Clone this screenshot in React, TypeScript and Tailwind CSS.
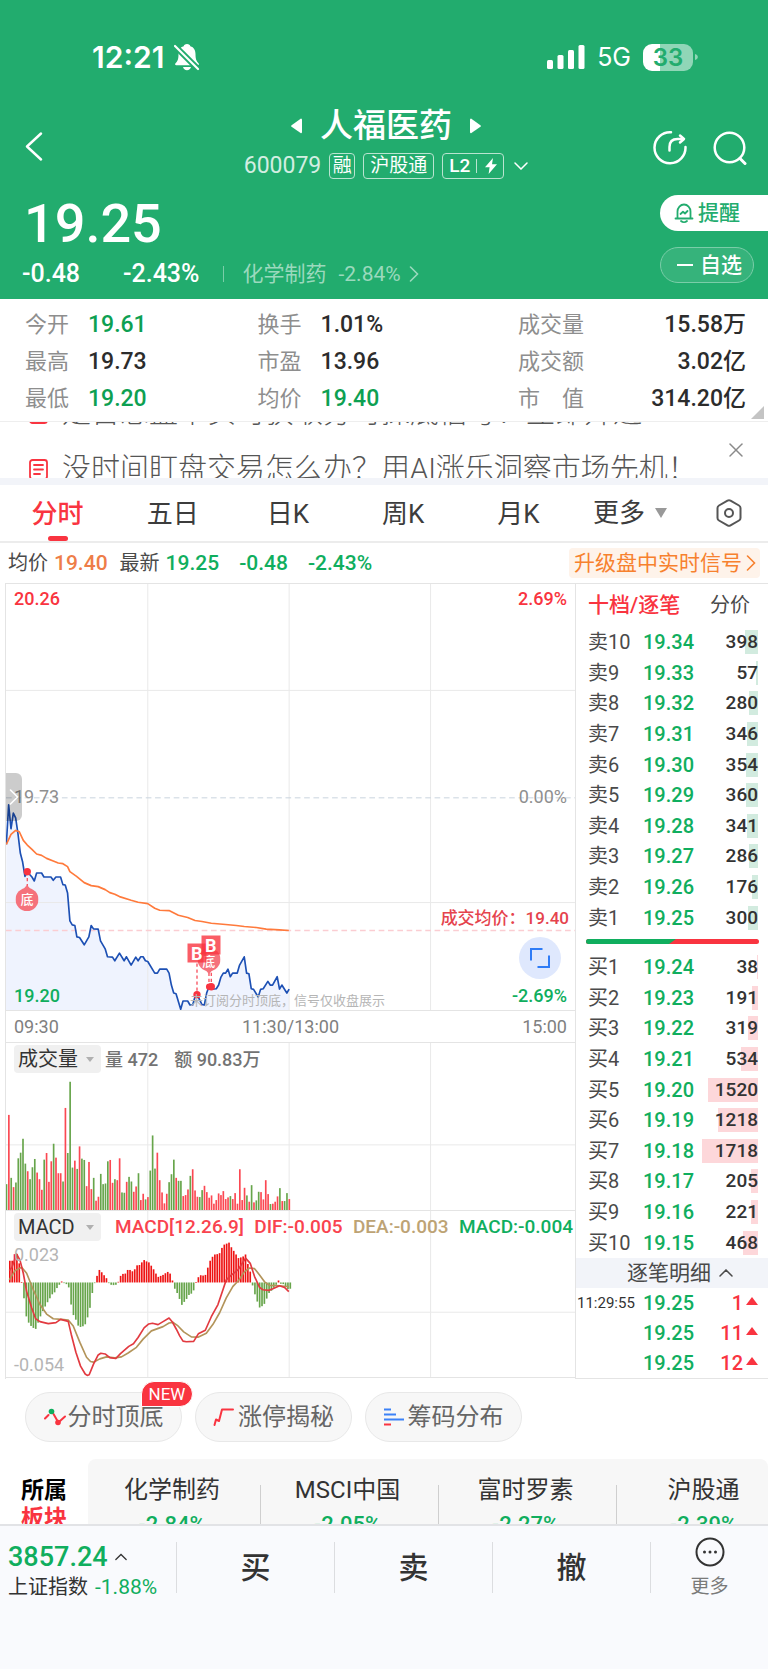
import { useState } from "react";
import { X } from "lucide-react";
import clsx from "clsx";

interface Quote {
  label: string;
  price: string;
  qty: number;
}

const SELLS: Quote[] = [
  { label: "卖10", price: "19.34", qty: 398 },
  { label: "卖9", price: "19.33", qty: 57 },
  { label: "卖8", price: "19.32", qty: 280 },
  { label: "卖7", price: "19.31", qty: 346 },
  { label: "卖6", price: "19.30", qty: 354 },
  { label: "卖5", price: "19.29", qty: 360 },
  { label: "卖4", price: "19.28", qty: 341 },
  { label: "卖3", price: "19.27", qty: 286 },
  { label: "卖2", price: "19.26", qty: 176 },
  { label: "卖1", price: "19.25", qty: 300 },
];

const BUYS: Quote[] = [
  { label: "买1", price: "19.24", qty: 38 },
  { label: "买2", price: "19.23", qty: 191 },
  { label: "买3", price: "19.22", qty: 319 },
  { label: "买4", price: "19.21", qty: 534 },
  { label: "买5", price: "19.20", qty: 1520 },
  { label: "买6", price: "19.19", qty: 1218 },
  { label: "买7", price: "19.18", qty: 1718 },
  { label: "买8", price: "19.17", qty: 205 },
  { label: "买9", price: "19.16", qty: 221 },
  { label: "买10", price: "19.15", qty: 468 },
];

const TICKS = [
  { time: "11:29:55", price: "19.25", qty: 1 },
  { time: "", price: "19.25", qty: 11 },
  { time: "", price: "19.25", qty: 12 },
];

const STATS = [
  [
    { label: "今开", value: "19.61", down: true },
    { label: "最高", value: "19.73", down: false },
    { label: "最低", value: "19.20", down: true },
  ],
  [
    { label: "换手", value: "1.01%", down: false },
    { label: "市盈", value: "13.96", down: false },
    { label: "均价", value: "19.40", down: true },
  ],
  [
    { label: "成交量", value: "15.58万", down: false },
    { label: "成交额", value: "3.02亿", down: false },
    { label: "市　值", value: "314.20亿", down: false },
  ],
];

const TABS = ["分时", "五日", "日K", "周K", "月K"];

const SECTORS = [
  { name: "化学制药", change: "-2.84%" },
  { name: "MSCI中国", change: "-2.05%" },
  { name: "富时罗素", change: "-2.27%" },
  { name: "沪股通", change: "-2.39%" },
];

// Chart geometry: three units per CSS pixel, plot starts at x=18
const PRICE_LINE =
  "19,822 26,703 33,775 40,728 47,742 54,790 61,848 68,875 75,918 82,905 96,920 103,932 110,908 125,908 132,920 153,920 160,930 168,920 182,920 189,943 196,944 203,968 210,1052 217,1064 225,1066 231,1100 239,1102 253,1124 267,1100 274,1066 281,1076 295,1077 302,1112 316,1136 323,1160 338,1161 345,1172 359,1149 373,1172 380,1160 394,1185 408,1161 415,1172 423,1160 430,1160 437,1172 444,1174 465,1209 473,1209 480,1197 501,1197 508,1209 515,1245 522,1269 529,1271 543,1318 550,1293 564,1293 571,1305 579,1305 586,1280 592,1273 607,1304 614,1305 621,1269 628,1250 635,1250 642,1257 650,1256 657,1245 664,1221 671,1209 678,1209 685,1197 692,1220 699,1209 713,1209 720,1185 734,1160 741,1209 748,1211 755,1256 762,1258 776,1281 783,1258 791,1256 805,1234 812,1245 819,1245 833,1220 840,1257 847,1245 862,1269 869,1257";

const AVG_LINE =
  "19,822 33,792 47,780 58,784 70,810 82,824 96,837 110,851 125,855 140,864 160,872 175,878 189,880 203,889 210,904 230,918 253,937 274,946 295,949 316,958 330,967 345,972 359,979 394,990 415,996 444,1000 465,1014 480,1020 508,1021 536,1035 564,1042 586,1051 607,1054 635,1059 678,1063 710,1066 734,1069 770,1072 800,1077 840,1079 868,1081";

// g = down minute, r = up minute, number = top of the bar
const VOLUMES =
  "g462 r253 g443 r471 g457 g384 g367 g325 g400 r423 g447 g411 g386 r427 r447 r479 g388 r368 r455 r393 g340 r382 r429 r429 g454 r232 g368 g153 g412 r391 g416 r348 g385 g389 r468 r395 r477 g443 r512 r500 g431 g462 g460 g393 r389 r458 g447 r450 r384 g487 g488 r455 g440 g454 r485 r469 g429 r510 r491 g508 r501 g421 g315 g415 r367 r450 r487 r520 r491 g456 g432 g388 r443 g452 g452 r498 r495 r478 g437 r417 r481 r500 g501 g480 r467 r486 r503 r496 r521 r510 r490 r495 r483 r507 r502 g498 r507 r489 r521 r417 r510 r473 g496 r515 g465 r517 g511 g485 r486 r508 r450 r492 g522 r521 r515 r499 g474 r513 g513 g489 r507".split(
    " ",
  );

const MACD_ZERO = 758;
const MACD_BARS = [
  692, 692, 672, 672, 700, 757, 806, 861, 880, 890, 896, 899, 880, 861, 845, 831, 818, 806, 794, 788, 775, 765, 755,
  760, 763, 773, 825, 857, 871, 889, 893, 891, 885, 864, 835, 790, 760, 738, 720, 727, 736, 745, 760, 765, 766, 765,
  756, 738, 732, 731, 720, 720, 724, 718, 706, 705, 697, 690, 694, 697, 707, 718, 731, 741, 738, 735, 730, 726, 731,
  752, 777, 790, 808, 826, 817, 808, 796, 792, 782, 757, 742, 736, 737, 735, 713, 692, 680, 673, 672, 669, 653, 643,
  640, 637, 651, 662, 673, 684, 682, 679, 673, 702, 725, 767, 794, 816, 834, 830, 823, 807, 790, 783, 774, 765, 752,
  762, 763, 769, 778, 777,
];

const DIF_LINE =
  "28,722 36,712 50,672 60,690 70,730 80,785 95,835 107,868 120,877 145,883 168,880 182,870 205,876 214,915 228,970 242,1012 256,1036 262,1040 268,1038 281,1006 295,978 303,973 316,975 330,986 348,989 362,974 387,952 401,944 415,925 433,896 447,884 458,882 475,886 490,877 508,866 518,878 530,900 540,920 550,936 560,938 582,937 596,914 617,903 635,862 655,825 670,780 680,750 695,736 715,720 738,684 752,700 765,740 780,773 790,780 808,782 820,777 840,768 855,773 868,786";

const DEA_LINE =
  "28,750 45,722 65,712 80,730 100,780 120,825 140,854 160,868 185,870 205,872 220,890 240,940 260,985 272,998 281,1000 300,990 320,984 345,987 365,984 385,972 410,955 430,930 455,905 490,892 508,881 520,879 535,890 552,908 575,923 595,924 620,912 640,885 660,850 680,805 700,770 717,752 735,725 750,714 765,716 780,735 795,756 810,767 840,768 868,771";

const MAX_QTY = 1718;

function SideArrow({ className }: { className: string }) {
  return (
    <svg className={className} viewBox="0 0 10 16" fill="none" stroke="currentColor" strokeWidth="1.600">
      <path d="M1.500 1 8.500 8l-7 7" strokeLinecap="round" />
    </svg>
  );
}

function UpArrow({ className }: { className: string }) {
  return (
    <svg className={className} viewBox="0 0 14 8" fill="none" stroke="currentColor" strokeWidth="1.500">
      <path d="M1 7 7 1l6 6" strokeLinecap="round" />
    </svg>
  );
}

function StatusBar() {
  return (
    <div className="flex items-center justify-between pt-[41px] pl-[92px] pr-[70px] font-['Inter',sans-serif]">
      <div className="flex items-center gap-2.5">
        <span className="text-[30px] leading-8 font-semibold">12:21</span>
        <svg className="w-[26px] h-[28px]" viewBox="0 0 26 28" fill="currentColor">
          <path d="M13 1c2 0 3 1 3.300 2.200 3.700 1 5.200 4 5.200 8 0 5 1 7 3 9 .8.9.4 2-.8 2H2.300c-1.200 0-1.600-1.100-.8-2 2-2 3-4 3-9 0-4 1.500-7 5.200-8C10 2 11 1 13 1ZM9 24h8c-.4 2-2 3.200-4 3.200S9.400 26 9 24Z" />
          <path d="M1 3 24 26" stroke="#22ac6e" strokeWidth="6" />
          <path d="M1 3 24 26" stroke="currentColor" strokeWidth="2.200" strokeLinecap="round" />
        </svg>
      </div>
      <div className="flex items-center">
        <svg className="w-[38px] h-6" viewBox="0 0 38 24" fill="currentColor">
          <rect x="0" y="15" width="6" height="9" rx="1.500" />
          <rect x="10.500" y="10" width="6" height="14" rx="1.500" />
          <rect x="21" y="5" width="6" height="19" rx="1.500" />
          <rect x="31.500" y="0" width="6" height="24" rx="1.500" />
        </svg>
        <span className="ml-3 text-[25px] leading-8">5G</span>
        <span className="ml-3 w-[50px] h-[27px] rounded-[9px] bg-gradient-to-r from-white from-33% to-[#90d6b7] to-33% text-[#22ac6e] text-[24px] leading-[27px] font-semibold text-center">
          33
        </span>
        <svg className="ml-0.5 w-[3px] h-2" viewBox="0 0 4 8">
          <path d="M0 0c5 1 5 7 0 8Z" fill="#90d6b7" />
        </svg>
      </div>
    </div>
  );
}

function Header() {
  return (
    <header className="bg-[#22ac6e] text-white pb-[9px]">
      <StatusBar />
      <div className="grid grid-cols-[1fr_auto_1fr] items-center pt-8 pl-[25px] pr-[21px]">
        <button aria-label="返回" className="pt-2">
          <svg className="w-[18px] h-[29px]" viewBox="0 0 18 29" fill="none" stroke="currentColor" strokeWidth="2.400">
            <path d="M16 1.500 2 14.500 16 27.500" strokeLinecap="round" strokeLinejoin="round" />
          </svg>
        </button>
        <div className="flex flex-col items-center gap-[5px]">
          <div className="flex items-center gap-[18px]">
            <button aria-label="上一只">
              <svg className="w-[11px] h-4" viewBox="0 0 11 16" fill="currentColor">
                <path d="M10 0.500c.6.200 1 .6 1 1.500v12c0 1-.6 1.500-1.400 1L.6 8.800c-.7-.5-.7-1.100 0-1.600Z" />
              </svg>
            </button>
            <h1 className="text-[33px] leading-[42px] font-medium">人福医药</h1>
            <button aria-label="下一只">
              <svg className="w-[11px] h-4" viewBox="0 0 11 16" fill="currentColor">
                <path d="M1 .5C.4.700 0 1.100 0 2v12c0 1 .6 1.500 1.400 1l9-6.200c.7-.5.7-1.100 0-1.600Z" />
              </svg>
            </button>
          </div>
          <div className="flex items-center">
            <span className="text-[23px] leading-7 text-[#d3eee2]">600079</span>
            <span className="ml-2 w-[26px] h-[26px] rounded border border-[#b9e4d0] text-[19px] leading-6 text-center">
              融
            </span>
            <span className="ml-2 w-[71px] h-[26px] rounded border border-[#b9e4d0] text-[19px] leading-6 text-center">
              沪股通
            </span>
            <span className="ml-2 w-[62px] h-[26px] rounded border border-[#b9e4d0] flex items-center justify-center text-[19px] leading-6 font-medium">
              L2
              <span className="w-px h-3.5 bg-[#b9e4d0] ml-1.5 mr-2" />
              <svg className="w-3 h-4" viewBox="0 0 12 16" fill="currentColor">
                <path d="M8 0 0 9.300h4.600L3.600 16 12 6.300H7Z" />
              </svg>
            </span>
            <UpArrow className="ml-2.5 w-3.5 h-2 rotate-180" />
          </div>
        </div>
        <div className="flex justify-end gap-[26px] pt-2.5">
          <button aria-label="分享">
            <svg
              className="w-[34px] h-[36px]"
              viewBox="0 0 34 36"
              fill="none"
              stroke="currentColor"
              strokeWidth="2.500"
              strokeLinecap="round"
            >
              <path d="M18 2.200A15.500 15.500 0 1 0 32.500 17" />
              <path d="M16.500 20.500V17c0-5.500 3-8 8-8h5.500" />
              <path d="m27 5.500 4 3.500-4 3.500" strokeLinejoin="round" />
            </svg>
          </button>
          <button aria-label="搜索">
            <svg
              className="w-[34px] h-[36px]"
              viewBox="0 0 34 36"
              fill="none"
              stroke="currentColor"
              strokeWidth="2.500"
              strokeLinecap="round"
            >
              <circle cx="16.500" cy="17.500" r="14.800" />
              <path d="m27 28.500 5 5" strokeWidth="3" />
            </svg>
          </button>
        </div>
      </div>
      <div className="flex justify-between pt-[14px]">
        <div className="pl-[22px]">
          <p className="pl-0.5 text-[54px] leading-[60px] font-medium">19.25</p>
          <div className="flex items-center text-[25px] leading-8 pt-1">
            <span className="w-[101px] font-medium">-0.48</span>
            <span className="font-medium">-2.43%</span>
            <span className="ml-6 w-px h-4 bg-[#7acda8]" />
            <a href="#sector" className="ml-[18px] flex items-center text-[#9bd9bd]">
              <span className="text-[21px]">化学制药</span>
              <span className="ml-3 text-[21px]">-2.84%</span>
              <SideArrow className="ml-2 w-2.5 h-4" />
            </a>
          </div>
        </div>
        <div className="flex flex-col gap-4 pt-px text-[21px] leading-8 font-medium">
          <button className="flex items-center gap-1 h-9 w-[108px] pl-[14px] rounded-l-full bg-white text-[#22ac6e]">
            <svg
              className="w-5 h-5"
              viewBox="0 0 20 20"
              fill="none"
              stroke="currentColor"
              strokeWidth="1.800"
              strokeLinecap="round"
              strokeLinejoin="round"
            >
              <path d="M1.500 15.500h17M3.500 15V8.500a6.500 7 0 0 1 13 0V15M7 18c1.600 1.400 4.400 1.400 6 0" />
              <path d="m6.500 11 2.500-2.200 2 1.700L13.500 8" />
            </svg>
            提醒
          </button>
          <button className="flex items-center gap-[7px] h-9 w-[94px] pl-4 rounded-full border border-[#7acda8] bg-[#36b37b]">
            <span className="w-4 h-0.5 bg-white" />
            自选
          </button>
        </div>
      </div>
    </header>
  );
}

function Stats() {
  return (
    <section className="relative flex justify-between pl-[25px] pr-[22px] pt-[7px] pb-1 border-b border-[#eeeeee] text-[22px]">
      {STATS.map((col, i) => (
        <dl key={i} className={clsx("leading-[37px]", i === 2 && "w-[228px]", i === 1 && "mr-6")}>
          {col.map((s) => (
            <div key={s.label} className={clsx("flex gap-[19px]", i === 2 && "justify-between")}>
              <dt className="text-[#8e8e8e]">{s.label}</dt>
              <dd className={clsx("text-[23px] font-medium", s.down ? "text-[#0da052]" : "text-[#2c2c2c]")}>
                {s.value}
              </dd>
            </div>
          ))}
        </dl>
      ))}
      <svg className="absolute right-1 bottom-0.5 w-[13px] h-[13px]" viewBox="0 0 13 13">
        <path d="M13 0v13H0Z" fill="#c4c4c4" />
      </svg>
    </section>
  );
}

function NoteIcon() {
  return (
    <svg className="w-[19px] h-[21px] shrink-0" viewBox="0 0 19 21" fill="none" stroke="#f93440" strokeWidth="1.800">
      <rect x="1" y="1" width="17" height="19" rx="2.500" />
      <path d="M5 6h9M5 10.500h9M5 15h6" strokeLinecap="round" />
    </svg>
  );
}

// Vertical ticker, caught between two messages
function Notice() {
  return (
    <section className="flex items-center justify-between h-14 pl-[29px] pr-5 overflow-hidden">
      <div className="self-start flex flex-col gap-[26px] -mt-6 text-[29px] leading-[30px] font-light text-[#555555] whitespace-nowrap">
        <p className="flex items-center gap-[14px]">
          <NoteIcon />
          是否想盘中实时获取分时探底信号？立即开通
        </p>
        <p className="flex items-center gap-[14px]">
          <NoteIcon />
          没时间盯盘交易怎么办？用AI涨乐洞察市场先机！
        </p>
      </div>
      <button aria-label="关闭">
        <X className="w-6 h-6 text-[#8a8a8a]" strokeWidth={1.5} />
      </button>
    </section>
  );
}

function PeriodTabs() {
  const [active, setActive] = useState("分时");
  return (
    <nav className="flex items-stretch h-[58px] border-b-2 border-[#ececec] text-[26px] leading-[59px] text-[#3c3c3c]">
      {TABS.map((t) => (
        <button
          key={t}
          onClick={() => setActive(t)}
          className={clsx("relative w-[15%] text-center", t === active && "text-[#f93440] font-medium")}
        >
          {t}
          {t === active && (
            <span className="absolute left-1/2 bottom-0 -translate-x-1/2 w-5 h-[5px] rounded-full bg-[#f93440]" />
          )}
        </button>
      ))}
      <button className="flex items-center gap-2.5 ml-[17px]">
        更多
        <svg className="w-3 h-2.5" viewBox="0 0 12 10">
          <path d="M0 0h12L6 10Z" fill="#999999" />
        </svg>
      </button>
      <button aria-label="设置" className="ml-auto mr-[26px]">
        <svg className="w-[26px] h-[28px]" viewBox="0 0 26 28" fill="none" stroke="#555555" strokeWidth="2">
          <path
            d="M11.500 1.600q1.500-.8 3 0l8.500 4.900q1.500.9 1.500 2.600v9.800q0 1.700-1.500 2.600l-8.500 4.900q-1.500.8-3 0L3 21.500q-1.500-.9-1.500-2.600V9.100Q1.500 7.400 3 6.500Z"
            strokeLinejoin="round"
          />
          <circle cx="13" cy="14" r="4" />
        </svg>
      </button>
    </nav>
  );
}

function QuoteLine() {
  return (
    <div className="flex items-center h-10 px-2 text-[21px] leading-[30px] text-[#10ae5e] font-medium">
      <span className="text-[20px] font-normal text-[#4a4a4a]">均价</span>
      <span className="ml-1.5 text-[#ee7d48]">19.40</span>
      <span className="ml-3 text-[20px] font-normal text-[#4a4a4a]">最新</span>
      <span className="ml-1.5">19.25</span>
      <span className="ml-5">-0.48</span>
      <span className="ml-5">-2.43%</span>
      <a
        href="#upgrade"
        className="ml-auto flex items-center gap-1 rounded bg-[#fef3ea] pl-[5px] pr-1 font-normal text-[#f7812e]"
      >
        升级盘中实时信号
        <SideArrow className="w-2.5 h-4" />
      </a>
    </div>
  );
}

function Grid({ top, height }: { top: number; height: number }) {
  const rows = height > 600 ? [top + 320, top + 958] : [top + height * 0.61];
  return (
    <g stroke="#e9e9e9" strokeWidth="3">
      {[444, 869, 1294].map((x) => (
        <path key={x} d={`M${x} ${top}v${height}`} />
      ))}
      {rows.map((y) => (
        <path key={y} d={`M18 ${y}h1710`} />
      ))}
    </g>
  );
}

interface MarkerProps {
  x: number;
  y: number;
  children: React.ReactNode;
  className: string;
}

// x and y are the marker's centre in pixels on the 570x427 price plot
function Marker({ x, y, children, className }: MarkerProps) {
  return (
    <span
      className={clsx("absolute -translate-x-1/2 -translate-y-1/2 text-white text-center", className)}
      style={{ left: `${(x / 570) * 100}%`, top: `${(y / 427) * 100}%` }}
    >
      {children}
    </span>
  );
}

function PriceChart() {
  return (
    <div className="relative h-[427px] border-t border-[#e4e4e4] text-[18px] leading-6 font-medium">
      <svg className="w-full h-full" viewBox="18 39 1710 1281" preserveAspectRatio="none" fill="none">
        <path d={`M18,1320 L${PRICE_LINE.split(" ").join(" L")} L869,1320Z`} fill="#eff3fe" />
        <Grid top={39} height={1281} />
        <path d="M18 682H1728" stroke="#c9d4de" strokeWidth="3" strokeDasharray="17 11" />
        <path d="M18 1081H1728" stroke="#fbcdd2" strokeWidth="4" strokeDasharray="17 11" />
        <polyline points={PRICE_LINE} stroke="#1d50b4" strokeWidth="5" strokeLinejoin="round" />
        <polyline points={AVG_LINE} stroke="#ff7a3c" strokeWidth="5" strokeLinejoin="round" />
        <g stroke="#f7505e" strokeWidth="4" strokeDasharray="10 8">
          <path d="M82 905V960" />
          <path d="M592 1180V1274" />
          <path d="M628 1190V1249" />
          <path d="M635 1190V1249" />
        </g>
        <g fill="#f93440">
          <circle cx="82" cy="904" r="11" />
          <circle cx="592" cy="1274" r="11" />
          <circle cx="629" cy="1250" r="10" />
          <circle cx="635" cy="1250" r="11" />
        </g>
      </svg>
      <span className="absolute left-2 top-[3px] text-[#f93440]">20.26</span>
      <span className="absolute right-2 top-[3px] text-[#f93440]">2.69%</span>
      <span className="absolute left-2 top-1/2 -translate-y-1/2 text-[#8f8f8f] font-normal">19.73</span>
      <span className="absolute right-2 top-1/2 -translate-y-1/2 text-[#8f8f8f] font-normal">0.00%</span>
      <span className="absolute left-2 bottom-0.5 text-[#10ae5e]">19.20</span>
      <span className="absolute right-2 bottom-0.5 text-[#10ae5e]">-2.69%</span>
      <span className="absolute right-1.5 bottom-20 text-[17px] text-[#e5434d]">成交均价：19.40</span>
      <span className="absolute left-[184px] bottom-0 text-[13px] leading-[18px] font-normal text-[#b5b5b5] whitespace-nowrap">
        未订阅分时顶底，信号仅收盘展示
      </span>
      <button
        aria-label="展开"
        className="absolute left-0 top-[189px] flex items-center justify-center w-4 h-12 rounded-r-md bg-black/20 text-white"
      >
        <SideArrow className="w-2.5 h-4" />
      </button>
      <Marker x={21} y={315} className="w-[23px] h-[26px]">
        <svg className="absolute inset-0" viewBox="0 0 23 26" fill="#f5727c">
          <circle cx="11.500" cy="14.500" r="11.500" />
          <path d="M7 5 11.500 0 16 5Z" />
        </svg>
        <span className="relative text-[13px] leading-[29px]">底</span>
      </Marker>
      <Marker x={203} y={378} className="w-[23px] h-[26px]">
        <svg className="absolute inset-0" viewBox="0 0 23 26" fill="#f5727c">
          <circle cx="11.500" cy="11.500" r="11.500" />
          <path d="M7 21 11.500 26 16 21Z" />
        </svg>
        <span className="relative text-[13px] leading-[22px]">底</span>
      </Marker>
      <Marker x={191} y={370} className="w-[19px] h-[19px] bg-[#f93440]/80 leading-[19px]! font-bold">
        B
      </Marker>
      <Marker x={205} y={362} className="w-[19px] h-[19px] bg-[#f93440]/80 leading-[19px]! font-bold">
        B
      </Marker>
      <button
        aria-label="全屏"
        className="absolute right-3.5 bottom-[31px] w-[42px] h-[42px] rounded-full bg-[#dfe8fd] flex items-center justify-center"
      >
        <svg className="w-5 h-5" viewBox="0 0 20 20" fill="none" stroke="#2f7cf6" strokeWidth="2">
          <path d="M1 12.500V1h11.500M19 7.500V19H7.500" />
        </svg>
      </button>
    </div>
  );
}

function IndicatorButton({ label }: { label: string }) {
  return (
    <button className="flex items-center justify-between w-[87px] h-7 px-1 pr-[7px] rounded bg-[#f0f0f0] text-[#333333] text-[20px]">
      {label}
      <svg className="w-2 h-[5px]" viewBox="0 0 8 5">
        <path d="M0 0h8L4 5Z" fill="#b0b0b0" />
      </svg>
    </button>
  );
}

function VolumeChart() {
  return (
    <div className="relative h-[168px] border-t border-[#e4e4e4]">
      <svg className="absolute inset-0 w-full h-full" viewBox="18 36 1710 504" preserveAspectRatio="none">
        <Grid top={36} height={504} />
        {VOLUMES.map((v, i) => {
          const top = Number(v.slice(1));
          return (
            <rect
              key={i}
              x={17 + i * 7.083}
              y={top}
              width="5"
              height={540 - top}
              fill={v[0] === "g" ? "#67a54b" : "#fb4852"}
            />
          );
        })}
      </svg>
      <div className="relative flex items-center pl-2 pt-0.5 text-[18px] text-[#737373]">
        <IndicatorButton label="成交量" />
        <span className="ml-1 font-medium">量 472</span>
        <span className="ml-4 font-medium">额 90.83万</span>
      </div>
    </div>
  );
}

function MacdChart() {
  return (
    <div className="relative h-[168px] border-y border-[#e4e4e4] text-[18px]">
      <svg className="absolute inset-0 w-full h-full" viewBox="18 541 1710 504" preserveAspectRatio="none" fill="none">
        <Grid top={541} height={504} />
        {MACD_BARS.map((y, i) => (
          <rect
            key={i}
            x={27 + i * 7.083}
            y={Math.min(y, MACD_ZERO)}
            width="5"
            height={Math.max(Math.abs(MACD_ZERO - y), 2)}
            fill={y < MACD_ZERO ? "#ee1313" : "#67a54b"}
          />
        ))}
        <polyline points={DEA_LINE} stroke="#b3945a" strokeWidth="5" strokeLinejoin="round" />
        <polyline points={DIF_LINE} stroke="#e23a40" strokeWidth="5" strokeLinejoin="round" />
      </svg>
      <div className="relative flex items-center pl-2 pt-0.5 pr-0.5">
        <IndicatorButton label="MACD" />
        <div className="flex-1 flex justify-between ml-3.5 text-[19px] font-medium whitespace-nowrap">
          <span className="text-[#f9434e]">MACD[12.26.9]</span>
          <span className="text-[#f9434e]">DIF:-0.005</span>
          <span className="text-[#bda374]">DEA:-0.003</span>
          <span className="text-[#10ae5e]">MACD:-0.004</span>
        </div>
      </div>
      <span className="absolute left-2 top-8 leading-6 text-[#b5b5b5]">0.023</span>
      <span className="absolute left-2 bottom-0 leading-6 text-[#b5b5b5]">-0.054</span>
    </div>
  );
}

function QuoteTable({ rows, side }: { rows: Quote[]; side: "sell" | "buy" }) {
  return (
    <table className="w-full h-[306px] text-[20px] leading-6">
      <tbody>
        {rows.map((r) => (
          <tr key={r.label}>
            <td className="p-0 pl-3 w-[67px] text-[#4a4a4a]">{r.label}</td>
            <td className="p-0 font-medium text-[#10ae5e]">{r.price}</td>
            <td className="p-0 pr-[10px]">
              <div className="relative text-right text-[19px] font-medium text-[#333333]">
                <span
                  className={clsx("absolute right-0 inset-y-0", side === "sell" ? "bg-[#d2ebdf]" : "bg-[#fdd7da]")}
                  style={{ width: Math.max(1, Math.round((r.qty / MAX_QTY) * 56)) }}
                />
                <span className="relative">{r.qty}</span>
              </div>
            </td>
          </tr>
        ))}
      </tbody>
    </table>
  );
}

function OrderBook() {
  return (
    <aside className="w-[193px] shrink-0 flex flex-col border border-r-0 border-[#e4e4e4]">
      <div className="flex justify-between pl-3 pr-[18px] text-[20px] leading-[43px]">
        <button className="text-[21px] font-medium text-[#f93440]">十档/逐笔</button>
        <button className="text-[#4a4a4a]">分价</button>
      </div>
      <QuoteTable rows={SELLS} side="sell" />
      <svg className="mt-1.5 mb-2 ml-[10px] w-[173px] h-[5px]" viewBox="0 0 173 5">
        <rect width="173" height="5" rx="2.500" fill="#f93440" />
        <path d="M2.500 0H90L83 5H2.500a2.500 2.500 0 0 1 0-5Z" fill="#10ae5e" />
      </svg>
      <QuoteTable rows={BUYS} side="buy" />
      <button className="flex items-center justify-center gap-2 h-[30px] pl-4 bg-[#f2f4f9] text-[21px] leading-[30px] text-[#4a4a4a]">
        逐笔明细
        <UpArrow className="w-3.5 h-2" />
      </button>
      <table className="w-full flex-1 text-[20px] leading-[30px] font-medium">
        <tbody>
          {TICKS.map((t, i) => (
            <tr key={i} className="h-[30px]">
              <td className="p-0 pl-px w-[67px] text-[15px] text-[#333333] font-normal">{t.time}</td>
              <td className="p-0 text-[#10ae5e]">{t.price}</td>
              <td className="p-0 pr-[10px] text-[#f93440]">
                <div className="flex items-center justify-end gap-[3px]">
                  {t.qty}
                  <svg className="w-3 h-2 mb-1" viewBox="0 0 12 8">
                    <path d="M6 0 12 8H0Z" fill="currentColor" />
                  </svg>
                </div>
              </td>
            </tr>
          ))}
        </tbody>
      </table>
    </aside>
  );
}

function Tools() {
  const pill =
    "relative flex items-center justify-center w-[157px] h-[50px] rounded-full border border-[#e8e8e8] bg-[#f7f7f7] text-[24px] text-[#666666] whitespace-nowrap";
  return (
    <section className="flex gap-[13px] pl-[25px] pt-[13px] pb-[17px]">
      <button className={pill}>
        <svg className="w-[22px] h-[18px] mr-0.5" viewBox="0 0 22 18" fill="none" stroke="#f93440" strokeWidth="2">
          <path d="M1 10.500 4.500 7M9.500 6l4 7M16 13l5-4.500" strokeLinecap="round" />
          <circle cx="7.500" cy="3.500" r="2.800" fill="#10ae5e" stroke="none" />
          <circle cx="14" cy="14.500" r="2.800" fill="#f93440" stroke="none" />
        </svg>
        分时顶底
        <span className="absolute -top-3 -right-3 w-[52px] h-[26px] rounded-full rounded-bl-none bg-[#f93440] border border-white text-white text-[17px] leading-6 text-center">
          NEW
        </span>
      </button>
      <button className={pill}>
        <svg className="w-[21px] h-[18px] mr-1" viewBox="0 0 21 18" fill="none" stroke="#f93440" strokeWidth="2">
          <path d="M1.500 17 3 11.500l3 1.500L9 1.500h11" strokeLinecap="round" strokeLinejoin="round" />
        </svg>
        涨停揭秘
      </button>
      <button className={pill}>
        <svg className="w-5 h-[18px] mr-1" viewBox="0 0 20 18" fill="none" stroke="#3c82f7" strokeWidth="2">
          <path d="M0 1.500h7M0 6.500h12M0 11.500h20" />
          <path d="M0 16.500h7" stroke="#f93440" />
        </svg>
        筹码分布
      </button>
    </section>
  );
}

function Sectors() {
  return (
    <section id="sector" className="flex">
      <h2 className="w-[88px] pl-[21px] pt-[18px] text-[23px] leading-7 font-bold text-black">
        所属
        <span className="block text-[#f93440]">板块</span>
      </h2>
      <ul className="flex flex-1 min-w-0 overflow-hidden rounded-t-lg bg-[#f7f7f7] pt-4">
        {SECTORS.map((s, i) => (
          <li key={s.name} className={clsx("flex shrink-0", i === 0 ? "w-[172px]" : "w-[178px]")}>
            {i > 0 && <span className="w-px mt-[10px] bg-[#cfcfcf]" />}
            <a href="#sector" className="flex-1 -ml-1 text-center text-[24px] leading-[30px] text-[#333333]">
              {s.name}
              <span className="block mt-1 text-[22px] leading-8 font-medium text-[#10ae5e]">{s.change}</span>
            </a>
          </li>
        ))}
      </ul>
    </section>
  );
}

function BottomBar() {
  return (
    <footer className="flex shrink-0 pt-4 pb-[69px] border-t-2 border-[#e2e3e6] bg-[#f9fafd]">
      <button className="w-[176px] pl-2 text-left">
        <span className="flex items-center gap-[7px] text-[27px] leading-[30px] font-medium text-[#10ae5e]">
          3857.24
          <UpArrow className="w-3 h-2 text-[#333333]" />
        </span>
        <span className="flex items-center gap-[7px] mt-0.5 text-[20px] leading-[26px] text-[#333333] whitespace-nowrap">
          上证指数 <span className="text-[21px] text-[#10ae5e]">-1.88%</span>
        </span>
      </button>
      {["买", "卖", "撤"].map((t) => (
        <button
          key={t}
          className="flex-1 h-[51px] border-l border-[#dcdde0] text-[30px] leading-[52px] font-medium text-[#333333]"
        >
          {t}
        </button>
      ))}
      <button className="flex flex-col items-center w-[118px] h-[51px] border-l border-[#dcdde0] text-[19px] leading-6 text-[#7a7a7a]">
        <svg className="-mt-[5px] w-[30px] h-[30px] shrink-0" viewBox="0 0 30 30" fill="#333333">
          <circle cx="15" cy="15" r="13.500" fill="none" stroke="#333333" strokeWidth="2" />
          <circle cx="9.500" cy="15" r="1.500" />
          <circle cx="15" cy="15" r="1.500" />
          <circle cx="20.500" cy="15" r="1.500" />
        </svg>
        <span className="mt-2">更多</span>
      </button>
    </footer>
  );
}

export default function App() {
  return (
    <div className="h-screen flex flex-col overflow-hidden bg-white font-[Roboto,'Noto_Sans_CJK_SC',sans-serif]">
      <main className="flex-1 min-h-0 overflow-hidden">
        <Header />
        <Stats />
        <Notice />
        <div className="h-[7px] bg-[#f2f4f9]" />
        <PeriodTabs />
        <QuoteLine />
        <div className="flex pl-[5px]">
          <div className="flex-1 min-w-0 border-l border-[#e4e4e4]">
            <PriceChart />
            <div className="grid grid-cols-3 px-2 border-t border-[#e4e4e4] text-[18px] leading-[31px] text-[#808080]">
              <span>09:30</span>
              <span className="text-center">11:30/13:00</span>
              <span className="text-right">15:00</span>
            </div>
            <VolumeChart />
            <MacdChart />
          </div>
          <OrderBook />
        </div>
        <Tools />
        <Sectors />
      </main>
      <BottomBar />
    </div>
  );
}
